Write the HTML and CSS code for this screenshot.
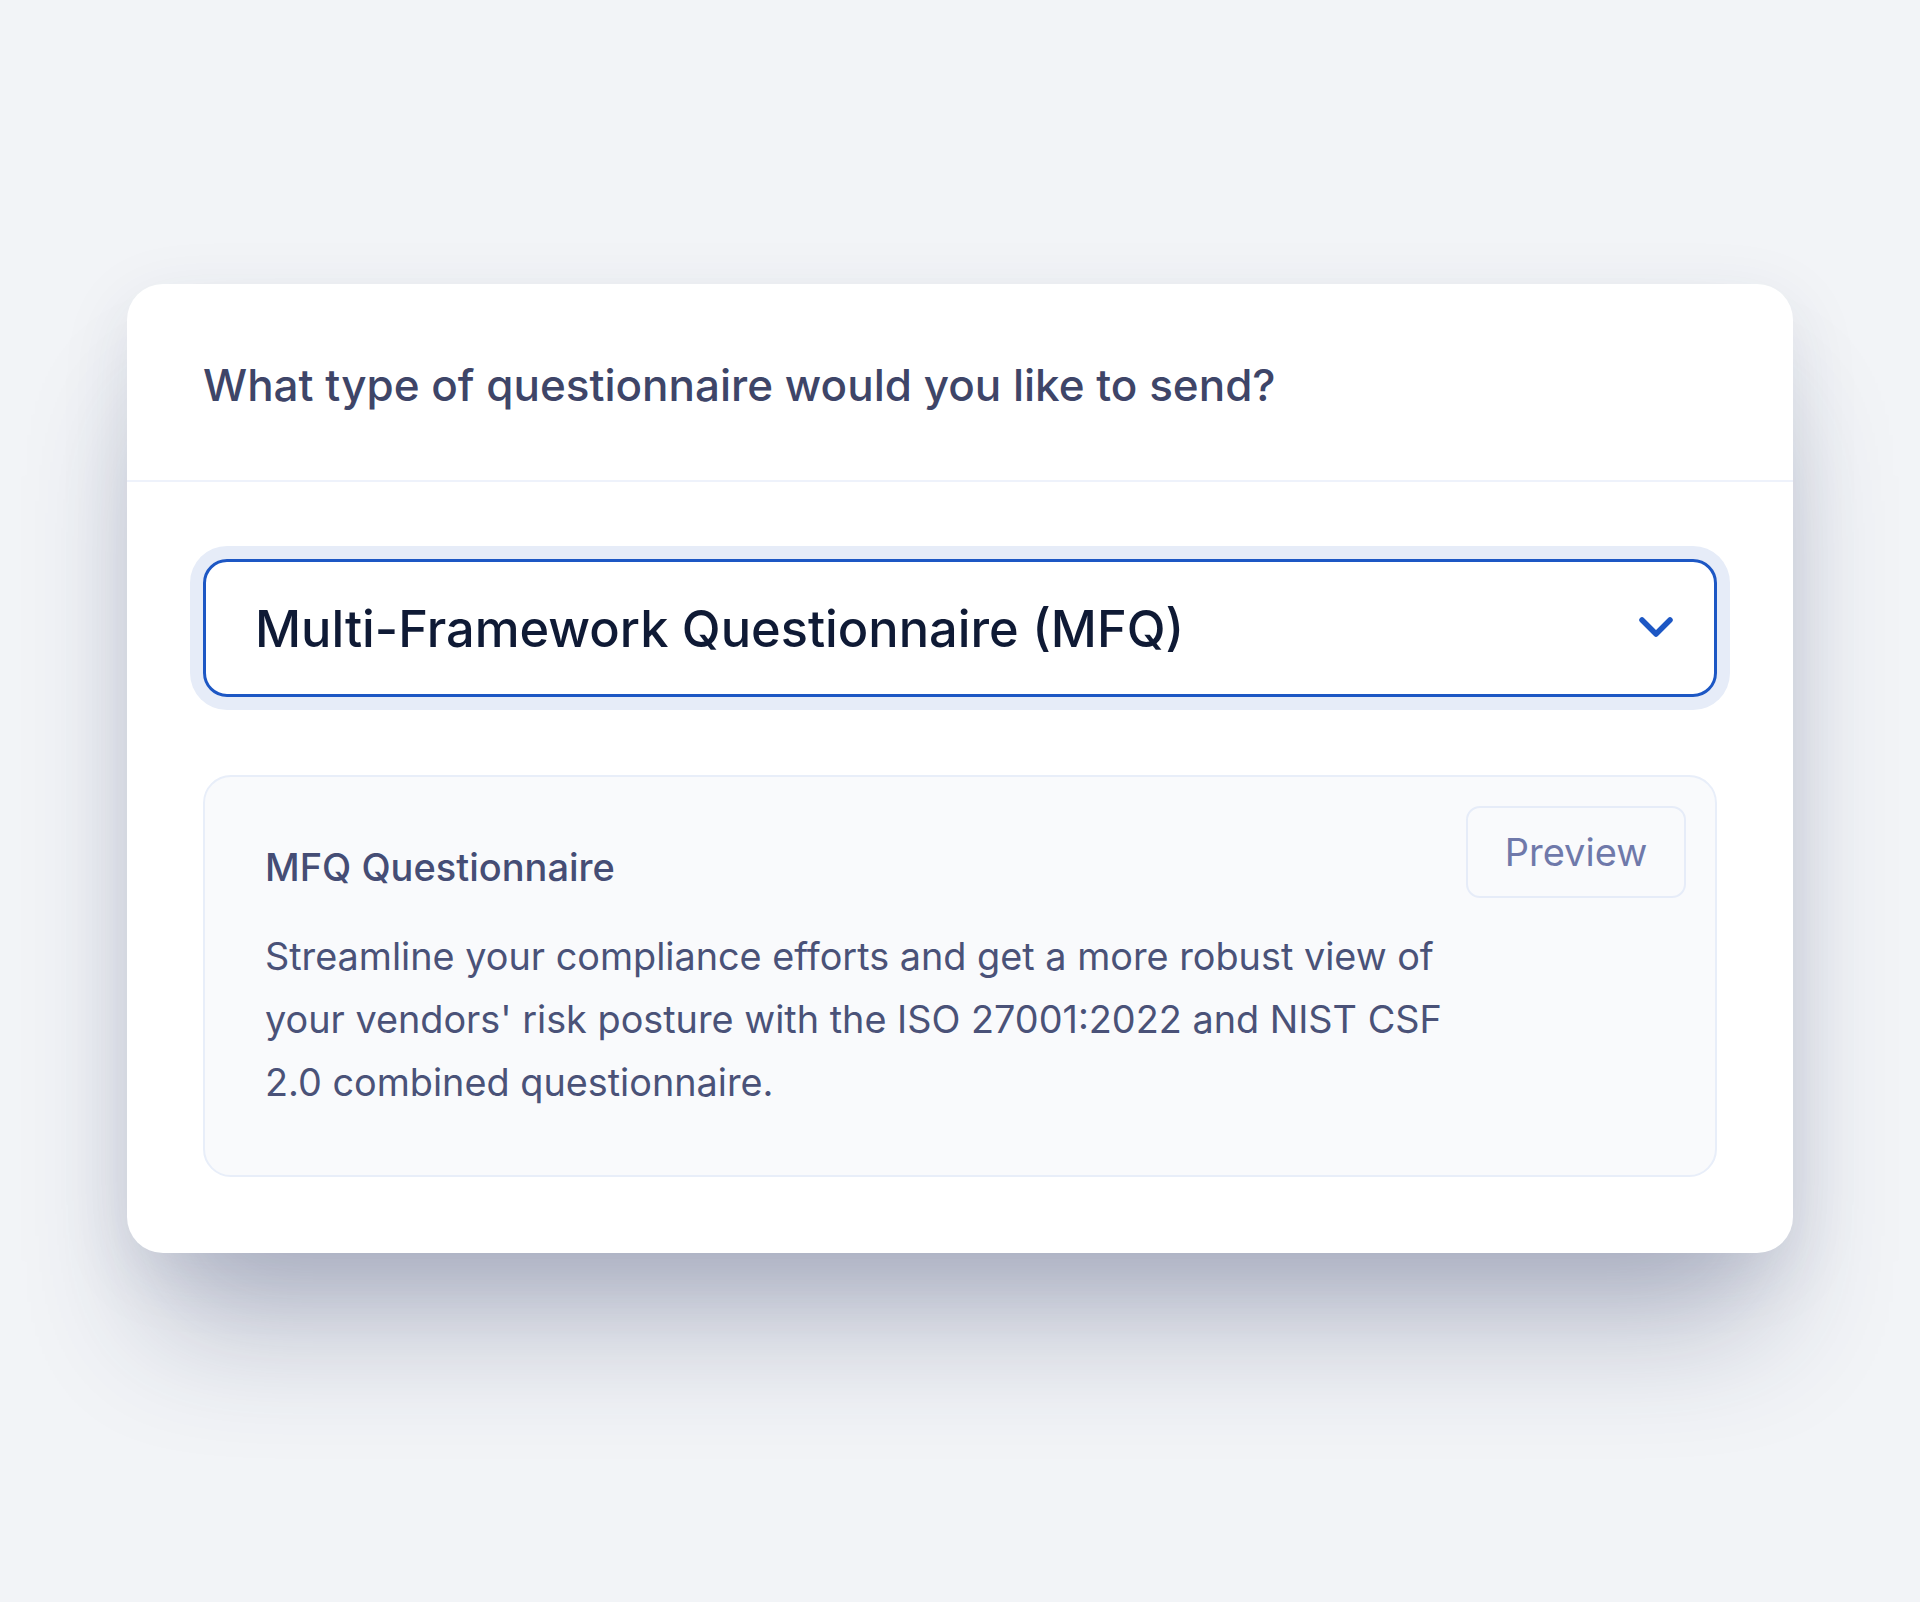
FILE: index.html
```html
<!DOCTYPE html>
<html lang="en">
<head>
  <meta charset="UTF-8">
  <meta name="viewport" content="width=device-width, initial-scale=1.0">
  <title>Send Questionnaire</title>
  <link rel="stylesheet" href="styles.css">
</head>
<body>
  <div class="page">
    <div class="card">
      <div class="card-header">
        <h2>What type of questionnaire would you like to send?</h2>
      </div>
      <div class="card-body">
        <div class="select">
          <span class="select-value">Multi-Framework Questionnaire (MFQ)</span>
          <svg class="chevron" width="36" height="24" viewBox="0 0 36 24">
            <polyline points="4,4 18,18 32,4" fill="none" stroke="#1d57c4" stroke-width="5.5" stroke-linecap="round" stroke-linejoin="round"/>
          </svg>
        </div>

        <div class="info">
          <div class="info-text">
            <h3>MFQ Questionnaire</h3>
            <p>Streamline your compliance efforts and get a more robust view of your vendors' risk posture with the ISO 27001:2022 and NIST CSF 2.0 combined questionnaire.</p>
          </div>
          <button class="preview">Preview</button>
        </div>
      </div>
    </div>
  </div>
</body>
</html>
```

FILE: styles.css
```css
body {
  margin: 0;
  background-color: #f2f4f7;
  font-family: Inter, "Noto Sans", sans-serif;
}
.page {
  display: flex;
  justify-content: center;
  padding-top: 284px;
  height: 1602px;
  box-sizing: border-box;
}
.card {
  width: 1666px;
  height: 969px;
  box-sizing: border-box;
  background: #fff;
  border-radius: 36px;
  box-shadow: 0 100px 130px -30px rgba(38, 48, 92, 0.3), 0 20px 70px rgba(38, 48, 92, 0.1);
}
.card-header {
  padding: 69px 76px 63px;
  border-bottom: 2px solid #eef2fb;
}
.card-header h2 {
  margin: 0;
  font-size: 44px;
  line-height: 64px;
  font-weight: 500;
  color: #3e4568;
}
.card-body {
  padding: 77px 76px 76px;
}
.select {
  display: flex;
  align-items: center;
  justify-content: space-between;
  height: 138px;
  box-sizing: border-box;
  padding: 0 40px 0 49px;
  border: 3px solid #1d57c4;
  border-radius: 24px;
  box-shadow: 0 0 0 13px #e6ecf8;
}
.select-value {
  font-size: 50.5px;
  font-weight: 500;
  color: #0f1a35;
}
.chevron {
  display: block;
}
.info {
  display: flex;
  gap: 12px;
  margin-top: 78px;
  padding: 29px 29px 61px 60px;
  border: 2px solid #e8eef9;
  border-radius: 28px;
  background: #f9fafc;
}
.info-text {
  flex: 1;
  padding-top: 33px;
}
.info-text h3 {
  margin: 0 0 29px;
  font-size: 38px;
  line-height: 57px;
  font-weight: 500;
  color: #454d75;
}
.info-text p {
  margin: 0;
  font-size: 37.8px;
  line-height: 63px;
  color: #4a5278;
}
.preview {
  flex-shrink: 0;
  width: 220px;
  height: 92px;
  font-family: inherit;
  font-size: 38px;
  color: #6f79aa;
  background: transparent;
  border: 2px solid #e6ecf8;
  border-radius: 14px;
  cursor: pointer;
}
```
